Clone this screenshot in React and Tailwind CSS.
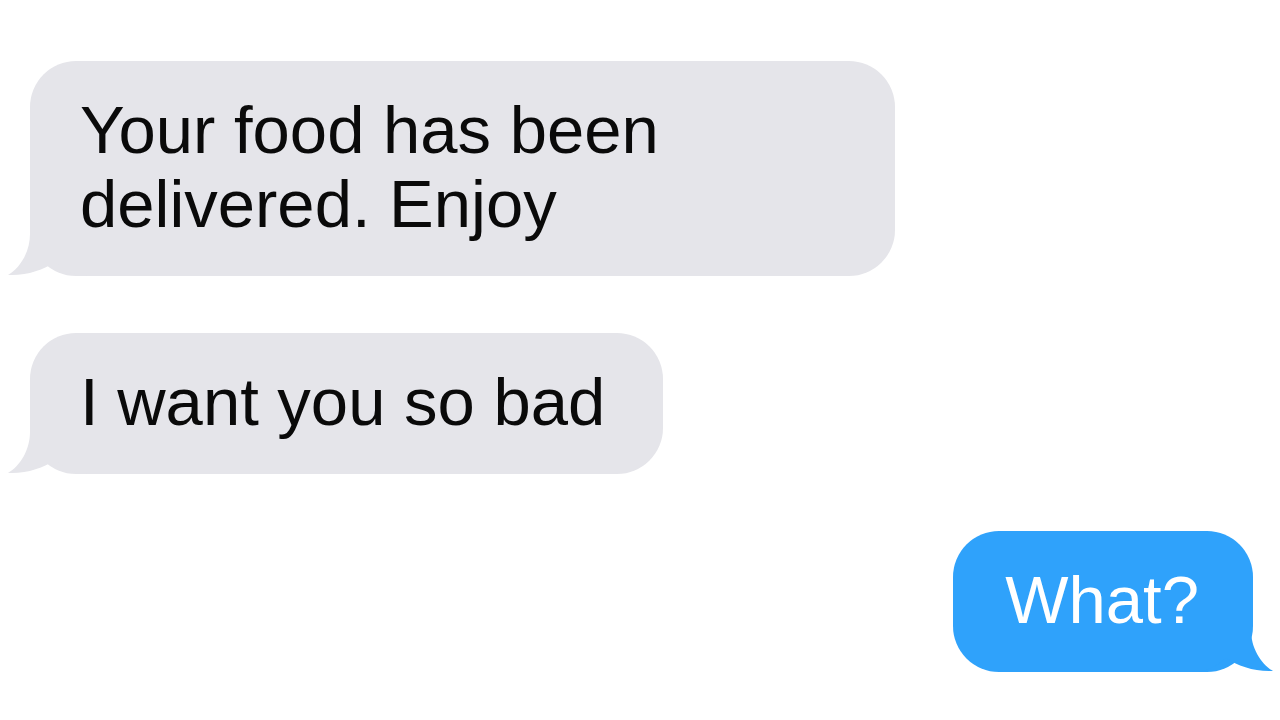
const messages = [
  { id: 1, text: "Your food has been delivered. Enjoy", from: "them", width: "w-[865px]" },
  { id: 2, text: "I want you so bad", from: "them" },
  { id: 3, text: "What?", from: "me" },
];

function Tail({ color, flip }) {
  return (
    <svg
      viewBox="0 0 84 66"
      className={`absolute bottom-0 w-[84px] h-[66px] ${
        flip ? "right-[-22px] -scale-x-100" : "left-[-24px]"
      }`}
    >
      <path
        d="M24 8 L24 24 C24 42 14 58 2 65 C20 66 37 60 49 52 C58 60 68 66 84 66 L84 8 Z"
        fill={color}
      />
    </svg>
  );
}

function Bubble({ text, from, width }) {
  const mine = from === "me";
  return (
    <div
      className={`relative ${width || ""} ${
        mine
          ? "self-end bg-[#2fa2fb] text-white pl-[52px] pr-[54px]"
          : "self-start bg-[#e5e5ea] text-[#0a0a0a] pl-[50px] pr-[58px]"
      } rounded-[46px] pt-[32px] pb-[35px]`}
    >
      <Tail color={mine ? "#2fa2fb" : "#e5e5ea"} flip={mine} />
      <p className="relative text-[67px] leading-[74px]">{text}</p>
    </div>
  );
}

export default function App() {
  return (
    <div
      className="w-[1280px] h-[720px] bg-white flex flex-col gap-[57px] pt-[61px] pl-[30px] pr-[27px] overflow-hidden"
      style={{ fontFamily: '"Liberation Sans", Arial, sans-serif' }}
    >
      {messages.map((m) => (
        <Bubble key={m.id} {...m} />
      ))}
    </div>
  );
}
